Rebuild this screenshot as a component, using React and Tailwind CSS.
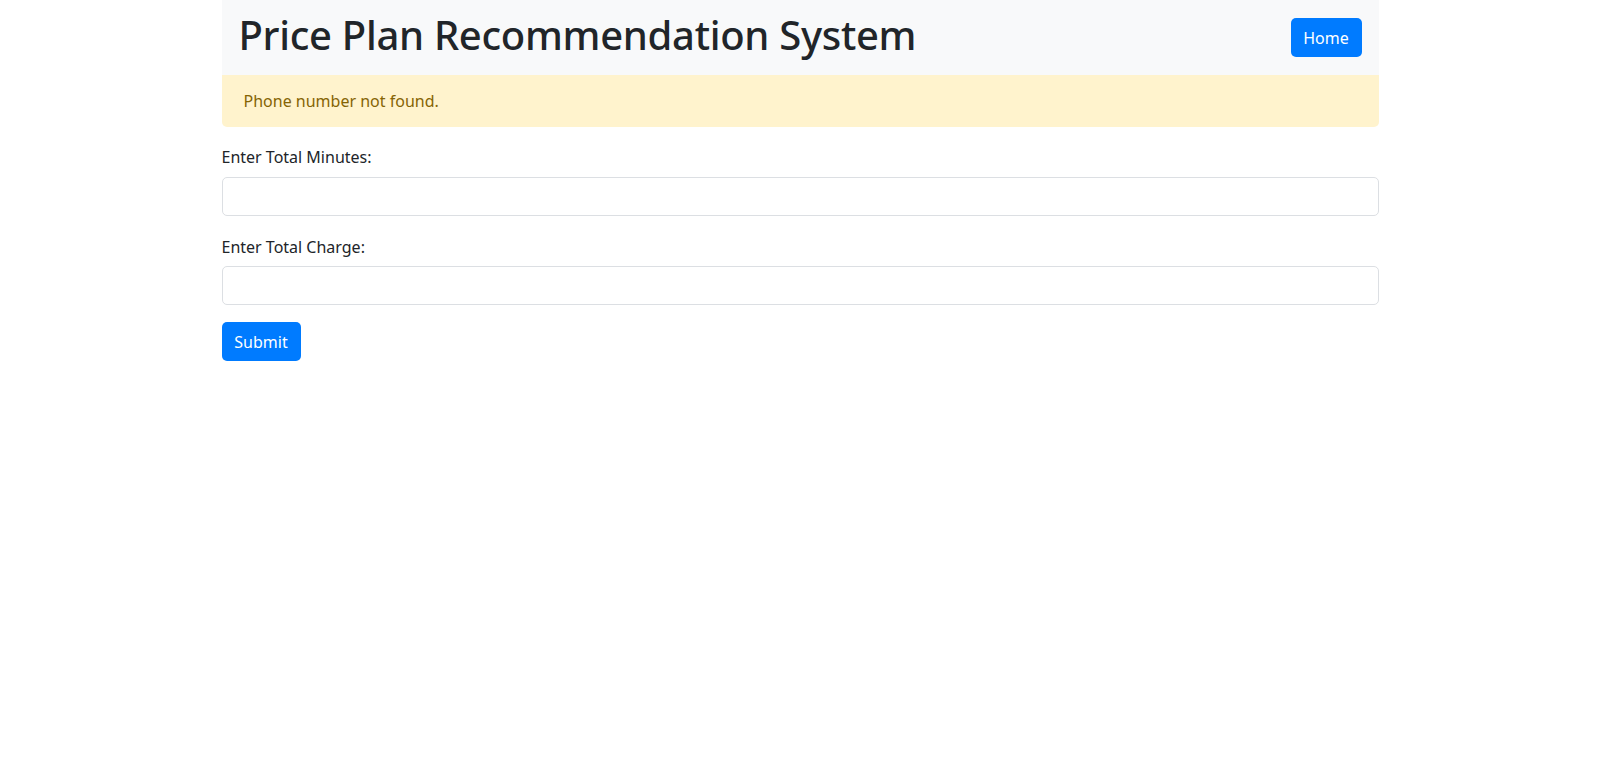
import React from "react";

export default function App() {
  return (
    <div className="min-h-screen bg-white text-[#212529]" style={{ fontFamily: '"Noto Sans", "Open Sans", sans-serif' }}>
      <div className="w-[1157px] mx-auto">
        {/* En-tête */}
        <div className="h-[75px] bg-[#f8f9fa] flex items-center justify-between pl-[17px] pr-[17px]">
          <h1 className="text-[40px] font-medium leading-none tracking-[-0.3px] -mt-[5px]">Price Plan Recommendation System</h1>
          <button className="h-[39px] w-[71px] bg-[#007bff] text-white text-[16px] rounded-[5px]">Home</button>
        </div>

        {/* Alerte */}
        <div className="h-[52px] bg-[#fff3cd] text-[#856404] rounded-b-[5px] flex items-center px-[22px] text-[16px]">
          Phone number not found.
        </div>

        {/* Formulaire */}
        <form className="mt-[18px]">
          <label className="block text-[16px] leading-6 mb-2">Enter Total Minutes:</label>
          <input type="text" className="block w-full h-[39px] border border-[#dcdfe3] rounded-[5px] px-3" />
          <label className="block text-[16px] leading-6 mt-[19px] mb-[7px]">Enter Total Charge:</label>
          <input type="text" className="block w-full h-[39px] border border-[#dcdfe3] rounded-[5px] px-3" />
          <button type="button" className="mt-[17px] h-[39px] w-[79px] bg-[#007bff] text-white text-[16px] rounded-[5px]">
            Submit
          </button>
        </form>
      </div>
    </div>
  );
}
